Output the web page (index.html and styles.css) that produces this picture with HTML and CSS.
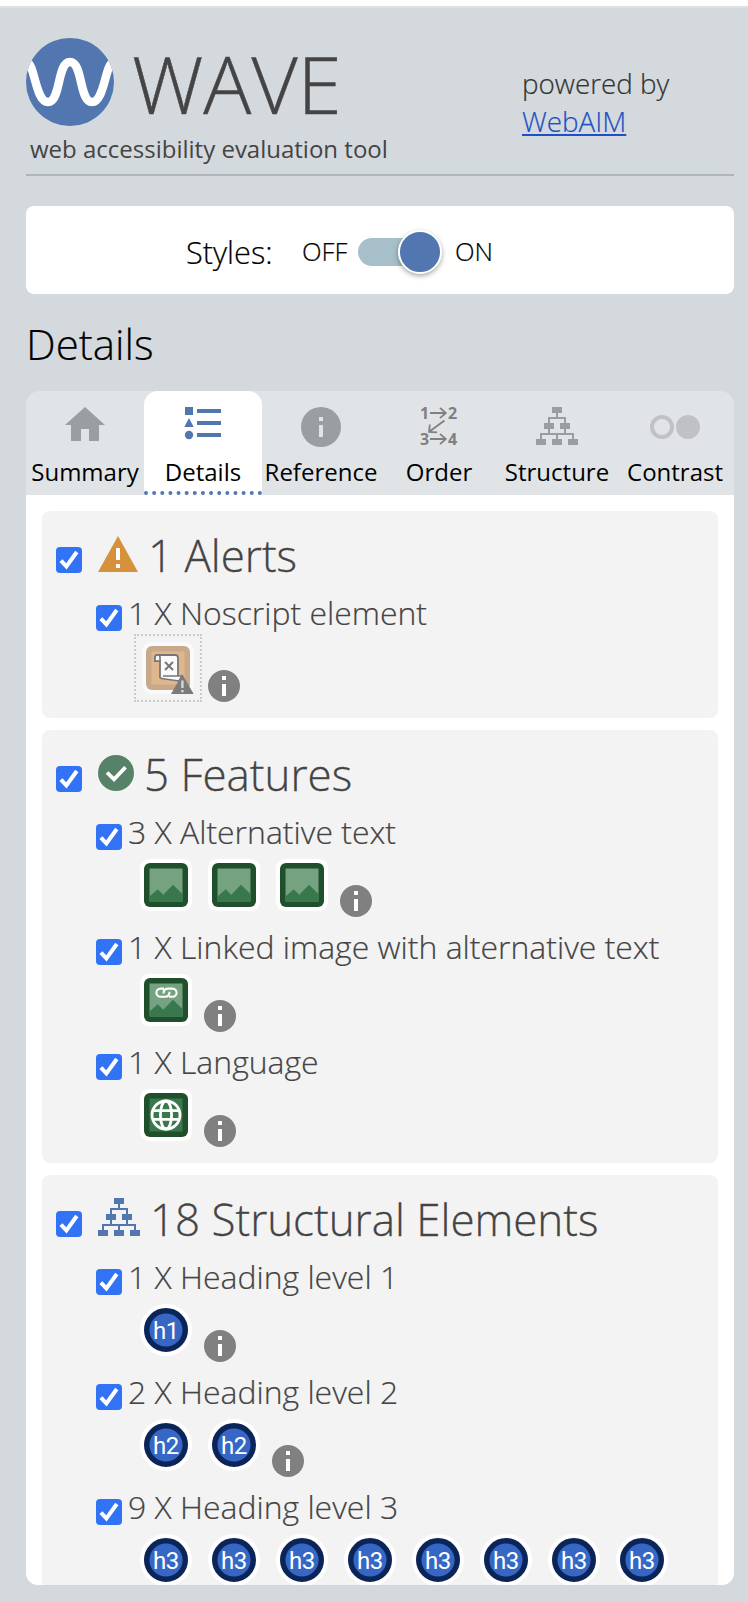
FILE: index.html
```html
<!DOCTYPE html>
<html lang="en">
<head>
<meta charset="utf-8">
<title>WAVE</title>
<link rel="stylesheet" href="styles.css">
</head>
<body>
<svg class="defs" aria-hidden="true">
  <symbol id="check" viewBox="0 0 26 26"><rect width="26" height="26" rx="4" fill="#3273f6"/><path d="M4.900 13.600l5.500 5.800L20.800 5" fill="none" stroke="#fff" stroke-width="4"/></symbol>
  <symbol id="info" viewBox="0 0 32 32"><circle cx="16" cy="16" r="16" fill="#808080"/><path d="M14 6h4v4h-4zM14 14h4v12h-4z" fill="#fff"/></symbol>
  <symbol id="tree" viewBox="0 0 42 38"><path fill="currentColor" d="M16 0h10v6h-4v4h8v6h4v6h-4v4h8v6h4v6H32v-6h4v-4H22v4h4v6H16v-6h4v-4H6v4h4v6H0v-6h4v-6h8v-4H8v-6h4v-6h8V6h-4zM14 12v4h4v6h-4v4h14v-4h-4v-6h4v-4z"/></symbol>
  <symbol id="picture" viewBox="0 0 52 52"><rect width="52" height="52" rx="9" fill="#fff"/><rect x="4" y="4" width="44" height="44" rx="6" fill="#204f2c"/><rect x="9.500" y="9.500" width="33" height="33" fill="#75a281"/><path d="M9.500 37.500l8.200-7.200 5.600 5.400 9.700-10 9.500 9.300v7.500h-33z" fill="#39784c"/></symbol>
  <symbol id="linked" viewBox="0 0 52 52"><use href="#picture"/><path d="M24 14.600h-3.500a4.100 4.100 0 0 0 0 8.200H25q4.500 0 4.500-5M29 22.800h3.500a4.100 4.100 0 0 0 0-8.200H28q-4.500 0-4.500 5" fill="none" stroke="#fff" stroke-width="2.100"/></symbol>
  <symbol id="globe" viewBox="0 0 52 52"><rect width="52" height="52" rx="9" fill="#fff"/><rect x="4" y="4" width="44" height="44" rx="6" fill="#204f2c"/><rect x="9.500" y="9.500" width="33" height="33" fill="#39784c"/><g fill="none" stroke="#fff" stroke-width="2.800"><circle cx="26" cy="26" r="14"/><ellipse cx="26" cy="26" rx="5.600" ry="14"/><path d="M13 21.700h26M13 30.300h26"/></g></symbol>
</svg>

<main class="sidebar">
  <header class="header">
    <div class="brand">
      <div class="brand-row">
        <svg class="logo" viewBox="0 0 88 88"><clipPath id="disc"><circle cx="44" cy="44" r="44"/></clipPath><g clip-path="url(#disc)"><rect width="88" height="88" fill="#5276b0"/><path d="M0 24C9 24 9 64 22 64S31 24 44 24 53 64 66 64 79 24 88 24" fill="none" stroke="#fff" stroke-width="8.500"/></g></svg>
        <span class="wordmark">WAVE</span>
      </div>
      <div class="tagline">web accessibility evaluation tool</div>
    </div>
    <div class="powered">powered by<br><a class="link" href="#">WebAIM</a></div>
  </header>

  <section class="styles-bar">
    <span class="styles-label">Styles:</span>
    <span class="state off">OFF</span>
    <span class="switch"><span class="knob"></span></span>
    <span class="state on">ON</span>
  </section>

  <h2 class="title">Details</h2>

  <nav class="tabs">
    <div class="tab"><svg class="tab-icon" viewBox="0 0 60 40"><path d="M30 0l20 18h-6v16H34V22h-8v12H16V18h-6z" fill="#9b9ea0"/></svg><span class="tab-label summary">Summary</span></div>
    <div class="tab active"><svg class="tab-icon" viewBox="0 0 60 40"><path d="M12 0h8v8h-8zM24 2h24v4H24zM24 14h24v4H24zM24 26h24v4H24zM16 11l4.700 9h-9.400z" fill="#5276b0"/><circle cx="16" cy="28" r="4.200" fill="#5276b0"/></svg><span class="tab-label">Details</span></div>
    <div class="tab"><svg class="tab-icon" viewBox="0 0 60 40"><circle cx="30" cy="20" r="20" fill="#9b9ea0"/><path d="M28 10h4v4h-4zM28 18h4v12h-4z" fill="#e0e4e7"/></svg><span class="tab-label">Reference</span></div>
    <div class="tab"><svg class="tab-icon" viewBox="0 0 60 40"><g class="order-num"><text x="11" y="12">1</text><text x="39" y="12">2</text><text x="11" y="38">3</text><text x="39" y="38">4</text></g><path d="M21 6h16M31 .8L36.800 6 31 11.200M21 32h16M31 26.800L36.800 32 31 37.200M35.500 13.500L20.500 24.500M20.800 17.500l-.7 7.300 8 .6" fill="none" stroke="#808080" stroke-width="1.800"/></svg><span class="tab-label">Order</span></div>
    <div class="tab"><svg class="tab-icon gray" viewBox="0 0 60 40"><use href="#tree" x="9" y="0" width="42" height="38"/></svg><span class="tab-label">Structure</span></div>
    <div class="tab"><svg class="tab-icon" viewBox="0 0 60 40"><circle cx="17" cy="20" r="10" fill="none" stroke="#c0c1c5" stroke-width="4"/><circle cx="43" cy="20" r="12" fill="#c0c1c5"/></svg><span class="tab-label">Contrast</span></div>
  </nav>

  <section class="panel">
    <div class="card">
      <div class="card-head"><svg class="checkbox"><use href="#check"/></svg><svg class="head-icon" width="40" height="36" viewBox="0 0 40 36"><path d="M20 0l20 36H0z" fill="#d6923a"/><path d="M18 12h4v12h-4zM18 28h4v4h-4z" fill="#fff"/></svg><h3 class="card-title">1 Alerts</h3></div>
      <div class="item item-muted">
        <div class="item-label"><svg class="checkbox"><use href="#check"/></svg><span>1 X Noscript element</span></div>
        <div class="icons">
          <span class="hidden-icon"><svg width="52" height="52" viewBox="0 0 52 52"><rect width="52" height="52" rx="9" fill="#fafafa"/><rect x="4" y="4" width="44" height="44" rx="6" fill="#c8a98a"/><rect x="9.500" y="9.500" width="33" height="33" fill="#e0b78d"/><path d="M15 13h18.500q2.500 0 2.500 3v20l-18-1V19h-5v-3q0-3 2-3z" fill="#fafafa" stroke="#787675" stroke-width="1.800"/><path d="M18 19v-4q0-2-2.500-2t-2.500 3v3zM18 34.500q0 2 3 2.200L37 39l3-5H21" fill="#fafafa" stroke="#787675" stroke-width="1.600"/><path d="M23 20l8 8M31 20l-8 8" stroke="#787675" stroke-width="2"/><path d="M40.300 32.300L51.700 52H29z" fill="#7b7b7b"/><path d="M39.200 38.500h2.400v7.500h-2.400zM39.200 48h2.400v2.200h-2.400z" fill="#d8d8d8"/></svg></span>
          <svg class="info"><use href="#info"/></svg>
        </div>
      </div>
    </div>

    <div class="card">
      <div class="card-head"><svg class="checkbox"><use href="#check"/></svg><svg class="head-icon" width="36" height="36" viewBox="0 0 36 36"><circle cx="18" cy="18" r="18" fill="#568367"/><path d="M9 17.500l7 6.800L27.500 12.200" fill="none" stroke="#fff" stroke-width="3.800"/></svg><h3 class="card-title">5 Features</h3></div>
      <div class="item">
        <div class="item-label"><svg class="checkbox"><use href="#check"/></svg><span>3 X Alternative text</span></div>
        <div class="icons"><svg class="icon"><use href="#picture"/></svg><svg class="icon"><use href="#picture"/></svg><svg class="icon"><use href="#picture"/></svg><svg class="info"><use href="#info"/></svg></div>
      </div>
      <div class="item">
        <div class="item-label"><svg class="checkbox"><use href="#check"/></svg><span>1 X Linked image with alternative text</span></div>
        <div class="icons"><svg class="icon"><use href="#linked"/></svg><svg class="info"><use href="#info"/></svg></div>
      </div>
      <div class="item">
        <div class="item-label"><svg class="checkbox"><use href="#check"/></svg><span>1 X Language</span></div>
        <div class="icons"><svg class="icon"><use href="#globe"/></svg><svg class="info"><use href="#info"/></svg></div>
      </div>
    </div>

    <div class="card">
      <div class="card-head"><svg class="checkbox"><use href="#check"/></svg><svg class="head-icon blue" width="42" height="38"><use href="#tree"/></svg><h3 class="card-title">18 Structural Elements</h3></div>
      <div class="item">
        <div class="item-label"><svg class="checkbox"><use href="#check"/></svg><span>1 X Heading level 1</span></div>
        <div class="icons"><span class="heading-icon">h1</span><svg class="info"><use href="#info"/></svg></div>
      </div>
      <div class="item">
        <div class="item-label"><svg class="checkbox"><use href="#check"/></svg><span>2 X Heading level 2</span></div>
        <div class="icons"><span class="heading-icon">h2</span><span class="heading-icon">h2</span><svg class="info"><use href="#info"/></svg></div>
      </div>
      <div class="item">
        <div class="item-label"><svg class="checkbox"><use href="#check"/></svg><span>9 X Heading level 3</span></div>
        <div class="icons"><span class="heading-icon">h3</span><span class="heading-icon">h3</span><span class="heading-icon">h3</span><span class="heading-icon">h3</span><span class="heading-icon">h3</span><span class="heading-icon">h3</span><span class="heading-icon">h3</span><span class="heading-icon">h3</span></div>
      </div>
    </div>
  </section>
</main>
</body>
</html>
```
FILE: styles.css
```css
* { box-sizing: border-box; }
body {
  margin: 0;
  padding-top: 6px;
  height: 1602px;
  overflow: hidden;
  background: #fff;
  font-family: "Open Sans", "Noto Sans", sans-serif;
  font-weight: 300;
  color: #444;
}
svg { display: block; flex: none; }
.defs { position: absolute; width: 0; height: 0; }
.sidebar {
  height: 1596px;
  border-top: 2px solid #dde2e1;
  background: #d4d9dd;
  padding: 30px 14px 17px 26px;
  display: flex;
  flex-direction: column;
}
.header {
  flex: none;
  height: 138px;
  border-bottom: 2px solid #b0b7b9;
  display: flex;
  justify-content: space-between;
}
.brand-row { display: flex; height: 88px; gap: 18px; }
.logo { width: 88px; height: 88px; }
.wordmark { font-size: 80px; line-height: 109px; margin-top: -10px; -webkit-text-stroke: .5px #4a4a4a; }
.tagline { font-size: 24px; line-height: 33px; margin: 6px 0 0 4px; font-weight: 400; white-space: nowrap; }
.powered { width: 212px; margin-top: 26px; font-size: 27.8px; line-height: 38px; color: #333; -webkit-text-stroke: .2px; }
.link { color: #1f50c4; }
.styles-bar {
  flex: none;
  height: 88px;
  margin-top: 30px;
  border-radius: 8px;
  background: #fff;
  color: #000;
  display: flex;
  align-items: center;
  padding: 4px 0 0 160px;
  -webkit-text-stroke: .2px;
}
.styles-label { font-size: 30.7px; line-height: 42px; width: 116px; margin-top: -1px; }
.state { font-size: 25.6px; line-height: 36px; margin-top: -1px; }
.off { width: 56px; }
.switch {
  width: 82px;
  height: 28px;
  border-radius: 14px;
  background: #a7bfc9;
  margin-top: -1px;
  display: flex;
  align-items: center;
  justify-content: flex-end;
}
.knob {
  flex: none;
  width: 44px;
  height: 44px;
  margin-right: -2px;
  border-radius: 50%;
  border: 2px solid #fff;
  background: #5276b0;
  box-shadow: 0 2px 5px rgba(0, 0, 0, .35);
}
.on { margin-left: 15px; }
.title { flex: none; margin: 20px 0 17px; font-size: 42px; line-height: 60px; font-weight: 300; color: #000; -webkit-text-stroke: .2px; }
.tabs {
  flex: none;
  height: 104px;
  display: grid;
  grid-template-columns: repeat(6, 118px);
  border-radius: 14px 14px 0 0;
  background: #e0e4e7;
  overflow: hidden;
}
.tab { display: flex; flex-direction: column; align-items: center; padding-top: 16px; gap: 8px; }
.active { background: #fff; border-radius: 14px 14px 0 0; border-bottom: 4px dotted #5276b0; }
.tab-icon { width: 60px; height: 40px; overflow: visible; }
.gray { color: #9b9ea0; }
.blue { color: #5276b0; }
.order-num { font-size: 16px; font-weight: 700; fill: #808080; }
.tab-label { font-size: 24px; line-height: 33px; font-weight: 400; color: #000; white-space: nowrap; }
.panel {
  flex: 1;
  min-height: 0;
  overflow: hidden;
  background: #fff;
  border-radius: 0 0 12px 12px;
  padding: 16px;
  display: flex;
  flex-direction: column;
  gap: 12px;
}
.card { flex: none; border-radius: 8px; background: #f3f3f3; padding-bottom: 8px; }
.card-head { height: 80px; display: flex; align-items: flex-end; padding: 0 0 19px 14px; }
.card-head .checkbox { margin: 0 16px -1px 0; }
.checkbox { width: 26px; height: 26px; }
.card-title { margin: 0 0 -13px 10px; font-size: 43.9px; line-height: 60px; font-weight: 300; white-space: nowrap; -webkit-text-stroke: .3px; }
.item { height: 115px; padding-left: 54px; }
.item-muted { height: 119px; }
.item-label { display: flex; height: 43px; gap: 6px; font-size: 31.95px; line-height: 43px; white-space: nowrap; -webkit-text-stroke: .2px; }
.item-label .checkbox { margin-top: 14px; }
.icons { display: flex; height: 64px; padding: 6px 0 0 44px; }
.icon, .heading-icon { flex: none; width: 52px; height: 52px; margin-right: 16px; }
.info { width: 32px; height: 32px; margin: 26px 0 0 -4px; }
.item-muted .icons { height: 68px; padding: 0 0 0 38px; }
.item-muted .info { margin: 36px 0 0 6px; }
.hidden-icon { width: 68px; height: 68px; padding: 6px; border: 2px dotted #ccc; }
.heading-icon {
  border: 4px solid #fff;
  border-radius: 50%;
  background: radial-gradient(circle, #3667c4 16px, #0c2559 17px);
  color: #fff;
  font: 400 24px/47px Roboto, sans-serif;
  letter-spacing: -.4px;
  text-align: center;
}
```
